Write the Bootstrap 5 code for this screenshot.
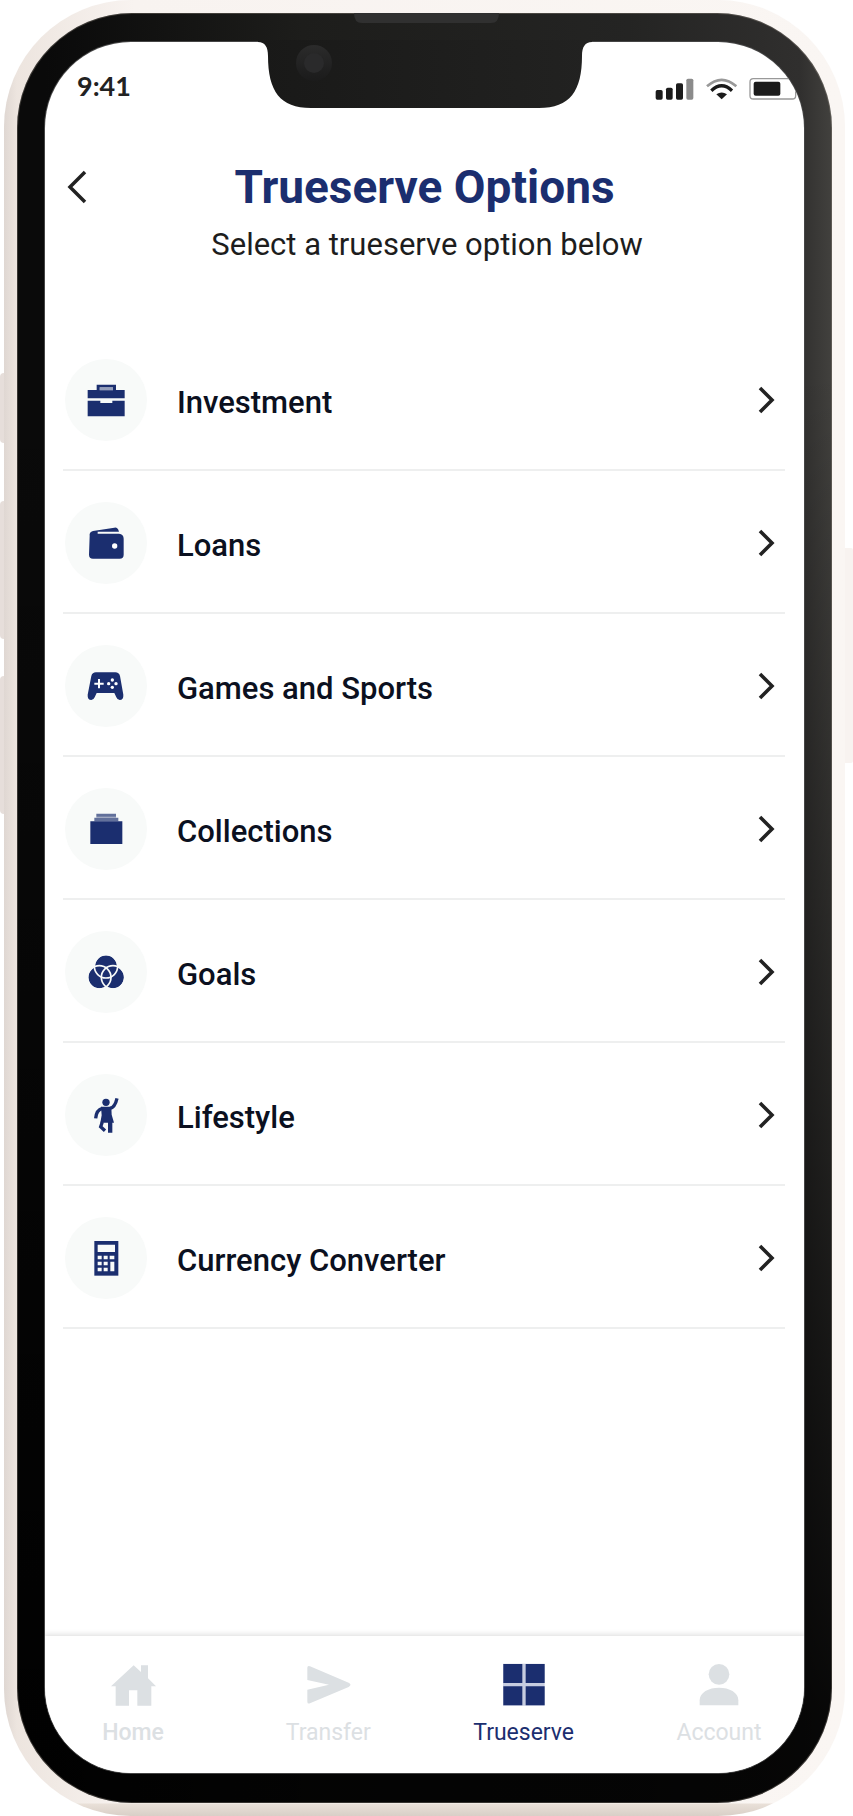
<!DOCTYPE html>
<html lang="en">
<head>
<meta charset="utf-8">
<meta name="viewport" content="width=device-width, initial-scale=1">
<title>Trueserve Options</title>
<link href="https://cdn.jsdelivr.net/npm/bootstrap@5.3.0/dist/css/bootstrap.min.css" rel="stylesheet">
<style>
  :root { --navy: #1b2e6f; --muted-ink: #dce0e3; --disc: #f8faf9; }
  body { font-family: Roboto, "Liberation Sans", sans-serif; background: #fff; color: #1d1d1d; }

  /* Handset */
  .phone { min-height: 100vh; padding: 0 8px 0 4px; }
  .shell {
    padding: 13px; border-radius: 127px;
    background:
      linear-gradient(to top, #d9cfc7 0, #e9e0d8 12px, transparent 13px),
      linear-gradient(to right, #dfd7d2 0, #ede5df 13px, #f8f3f0 130px, #faf6f3 100%);
  }
  .bezel {
    padding: 29px 28px 30px; border-radius: 115px;
    box-shadow: inset 0 0 0 1px rgba(150, 140, 130, .35);
    background:
      linear-gradient(to bottom, transparent 20%, rgba(0, 0, 0, .4) 55%, rgba(0, 0, 0, .65) 75%, rgba(0, 0, 0, .88) 95%),
      linear-gradient(to right, #0a0a0a 0, #0a0a0a 28px, #1d1d1b 35%, #242423 75%, #302f2e 96%, #42413e 100%);
  }
  .screen { border-radius: 86px; background: #fff; overflow: hidden; box-shadow: 0 0 0 1px #454545; }
  .notch { position: absolute; top: 0; left: 50%; transform: translateX(-50%); }
  .side-key { position: absolute; background: #e6deda; }
  .key-left { left: 0; width: 4px; border-radius: 4px 0 0 4px; }
  .key-right { right: 0; width: 8px; background: #f8f3f0; border-radius: 0 2px 2px 0; }

  /* Status bar and heading */
  .status { height: 65px; padding: 24px 5px 0 32px; }
  .clock { font: 700 27px/40px Lato, sans-serif; color: #222; }
  .heading { padding: 52px 16px 0; }
  .side-slot { width: 40px; height: 56px; }
  .heading h1 { font-size: 46px; line-height: 56px; font-weight: 700; color: var(--navy); }
  .lead-text { font-size: 31px; line-height: 40px; margin-top: 10px; padding-left: 5px; }

  /* Options */
  .options { margin: 63px 19px 0 18px; --bs-list-group-border-radius: 0; }
  .options .option, .options .option:last-child {
    height: 143px; padding: 2px 10px 0 2px; border: 0; border-bottom: 2px solid #eeefef;
    font-size: 31px; line-height: 40px; font-weight: 500; color: #0b1020; background: #fff;
  }
  .disc { width: 82px; height: 82px; margin-right: 30px; background: var(--disc); color: var(--navy); }
  .option-name { padding-top: 6px; }

  /* Tab bar */
  .tabbar { padding: 26px 32px 26px 35px; box-shadow: 0 0 6px 1px rgba(0, 0, 0, .15); background: #fff; }
  .tab { width: 106px; gap: 11px; font-size: 23px; line-height: 28px; color: var(--muted-ink); text-decoration: none; }
  .tab.active { color: var(--navy); }
  .tab-strong { font-weight: 500; }
</style>
</head>
<body>
<div class="phone position-relative d-flex flex-column">
  <span class="side-key key-left" style="top:373px;height:70px"></span>
  <span class="side-key key-left" style="top:501px;height:138px"></span>
  <span class="side-key key-left" style="top:676px;height:138px"></span>
  <span class="side-key key-right" style="top:548px;height:215px"></span>

  <div class="shell flex-grow-1 d-flex flex-column">
    <div class="bezel position-relative flex-grow-1 d-flex flex-column">
      <div class="screen flex-grow-1 d-flex flex-column">

        <div class="status d-flex justify-content-between">
          <span class="clock">9:41</span>
          <svg width="144" height="40" viewBox="0 0 432 120" aria-hidden="true">
            <g fill="#1b1b1b">
              <rect x="2" y="72" width="21" height="29" rx="5"/>
              <rect x="33" y="65" width="20" height="36" rx="5"/>
              <rect x="63" y="52" width="21" height="49" rx="5"/>
              <rect x="94" y="38" width="21" height="63" rx="5" fill="#8b8b8b"/>
              <path d="M184 85Q200 74 216 85L200 100Z"/>
              <rect x="296" y="47" width="80" height="42" rx="6"/>
            </g>
            <path d="M156 61Q200 22 244 61" fill="none" stroke="#999" stroke-width="8"/>
            <path d="M169 74Q200 45 231 74" fill="none" stroke="#1b1b1b" stroke-width="10"/>
            <rect x="285" y="38" width="137" height="61" rx="10" fill="none" stroke="#999" stroke-width="4"/>
          </svg>
        </div>

        <header class="heading">
          <div class="d-flex align-items-center">
            <button type="button" class="side-slot btn border-0 p-0 d-flex align-items-center" aria-label="Back">
              <svg width="32" height="34" viewBox="0 0 32 34" fill="none" stroke="#222" stroke-width="3.5"><path d="M24 2 9 17l15 15"/></svg>
            </button>
            <h1 class="flex-grow-1 text-center mb-0">Trueserve Options</h1>
            <span class="side-slot"></span>
          </div>
          <p class="lead-text text-center mb-0">Select a trueserve option below</p>
        </header>

        <main class="flex-grow-1">
          <nav class="options list-group list-group-flush" aria-label="Options">
            <a href="#" class="option list-group-item list-group-item-action d-flex align-items-center">
              <span class="disc rounded-circle d-flex align-items-center justify-content-center">
                <svg width="42" height="42" viewBox="0 0 126 126" fill="currentColor"><path fill-rule="evenodd" d="M8 33H35V17H93V33H119V58H8ZM44 25V34H84V25Z"/><path d="M8 65H46V72H82V65H119V112H8Z"/><path d="M44 25h40v9H44z" opacity=".45"/></svg>
              </span>
              <span class="option-name flex-grow-1">Investment</span>
              <svg width="17" height="28" viewBox="0 0 17 28" fill="none" stroke="#222" stroke-width="3.6"><path d="M2 2 14 14 2 26"/></svg>
            </a>
            <a href="#" class="option list-group-item list-group-item-action d-flex align-items-center">
              <span class="disc rounded-circle d-flex align-items-center justify-content-center">
                <svg width="42" height="42" viewBox="0 0 126 126" fill="currentColor"><path d="M14 42Q12 30 24 27L88 17Q98 15 102 29H38V35H102Q116 36 116 50V98Q116 110 104 110H24Q12 110 12 98Z"/><circle cx="89" cy="72" r="8" fill="#fff"/></svg>
              </span>
              <span class="option-name flex-grow-1">Loans</span>
              <svg width="17" height="28" viewBox="0 0 17 28" fill="none" stroke="#222" stroke-width="3.6"><path d="M2 2 14 14 2 26"/></svg>
            </a>
            <a href="#" class="option list-group-item list-group-item-action d-flex align-items-center">
              <span class="disc rounded-circle d-flex align-items-center justify-content-center">
                <svg width="42" height="42" viewBox="0 0 126 126" fill="currentColor"><path d="M33 22H91Q102 22 105 33L115 89Q116 105 104 105Q97 105 94 97L88 84H35L29 97Q26 105 19 105Q7 105 8 89L19 33Q22 22 33 22Z"/><path d="M42 42V70M28 56H56" stroke="#fff" stroke-width="6"/><g fill="#fff"><circle cx="82" cy="45" r="5"/><circle cx="82" cy="67" r="5"/><circle cx="71" cy="56" r="5"/><circle cx="93" cy="56" r="5"/></g></svg>
              </span>
              <span class="option-name flex-grow-1">Games and Sports</span>
              <svg width="17" height="28" viewBox="0 0 17 28" fill="none" stroke="#222" stroke-width="3.6"><path d="M2 2 14 14 2 26"/></svg>
            </a>
            <a href="#" class="option list-group-item list-group-item-action d-flex align-items-center">
              <span class="disc rounded-circle d-flex align-items-center justify-content-center">
                <svg width="42" height="42" viewBox="0 0 126 126" fill="currentColor"><path d="M16 40h96v68H16z"/><path d="M28 29h72v11H28zM34 17h59v9H34z" opacity=".68"/><path d="M34 26h59v3H34z" opacity=".4"/></svg>
              </span>
              <span class="option-name flex-grow-1">Collections</span>
              <svg width="17" height="28" viewBox="0 0 17 28" fill="none" stroke="#222" stroke-width="3.6"><path d="M2 2 14 14 2 26"/></svg>
            </a>
            <a href="#" class="option list-group-item list-group-item-action d-flex align-items-center">
              <span class="disc rounded-circle d-flex align-items-center justify-content-center">
                <svg width="42" height="42" viewBox="0 0 126 126" fill="currentColor"><circle cx="63" cy="46" r="33"/><circle cx="43" cy="79" r="33"/><circle cx="84" cy="79" r="33"/><g fill="none" stroke="#f8faf9" stroke-width="5"><circle cx="63" cy="46" r="35"/><circle cx="43" cy="79" r="35"/><circle cx="84" cy="79" r="35"/></g></svg>
              </span>
              <span class="option-name flex-grow-1">Goals</span>
              <svg width="17" height="28" viewBox="0 0 17 28" fill="none" stroke="#222" stroke-width="3.6"><path d="M2 2 14 14 2 26"/></svg>
            </a>
            <a href="#" class="option list-group-item list-group-item-action d-flex align-items-center">
              <span class="disc rounded-circle d-flex align-items-center justify-content-center">
                <svg width="42" height="42" viewBox="0 0 126 126" fill="currentColor"><circle cx="63" cy="25" r="11"/><path d="M48 38H79L80 62 87 86H82V116H69V86H46L50 64Z"/><path d="M75 43Q90 40 96 13M52 43Q34 48 32 73M52 84L47 98 60 110" fill="none" stroke="currentColor" stroke-width="10"/></svg>
              </span>
              <span class="option-name flex-grow-1">Lifestyle</span>
              <svg width="17" height="28" viewBox="0 0 17 28" fill="none" stroke="#222" stroke-width="3.6"><path d="M2 2 14 14 2 26"/></svg>
            </a>
            <a href="#" class="option list-group-item list-group-item-action d-flex align-items-center">
              <span class="disc rounded-circle d-flex align-items-center justify-content-center">
                <svg width="42" height="42" viewBox="0 0 126 126" fill="currentColor"><path d="M28 12h72v104H28z"/><path fill="#f8faf9" d="M38 23h52v22H38zM38 56h12v11H38zM56 56h12v11H56zM74 56h14v11H74zM38 74h12v11H38zM56 74h12v11H56zM38 92h12v11H38zM56 92h12v11H56zM76 74h12v29H76z"/></svg>
              </span>
              <span class="option-name flex-grow-1">Currency Converter</span>
              <svg width="17" height="28" viewBox="0 0 17 28" fill="none" stroke="#222" stroke-width="3.6"><path d="M2 2 14 14 2 26"/></svg>
            </a>
          </nav>
        </main>

        <nav class="tabbar d-flex justify-content-between" aria-label="Main">
          <a href="#" class="tab tab-strong d-flex flex-column align-items-center">
            <svg width="46" height="46" viewBox="0 0 138 138" fill="currentColor"><path d="M71 10 93 30V10H114V49L138 73H124V131H82V85H57V131H17V73H3Z"/></svg>
            <span>Home</span>
          </a>
          <a href="#" class="tab d-flex flex-column align-items-center">
            <svg width="46" height="46" viewBox="0 0 138 138" fill="currentColor"><path d="M7 17Q7 10 15 13L131 62Q142 68 131 75L15 124Q7 127 7 119V83L72 68 7 54Z"/></svg>
            <span>Transfer</span>
          </a>
          <a href="#" class="tab active d-flex flex-column align-items-center" aria-current="page">
            <svg width="46" height="46" viewBox="0 0 138 138" fill="currentColor"><path d="M6 5h125v126H6z" fill="#c6cce0"/><path d="M7 6h57v57H7zM74 6h57v57H74zM7 73h57v57H7zM74 73h57v57H74z"/></svg>
            <span>Trueserve</span>
          </a>
          <a href="#" class="tab d-flex flex-column align-items-center">
            <svg width="46" height="46" viewBox="0 0 138 138" fill="currentColor"><circle cx="69" cy="37" r="31"/><path d="M11 130V115C11 91 38 77 69 77S127 91 127 115V130Z"/></svg>
            <span>Account</span>
          </a>
        </nav>
      </div>

      <svg class="notch" width="334" height="95" viewBox="0 0 334 95" aria-hidden="true">
        <defs>
          <linearGradient id="notchFill"><stop offset="0" stop-color="#191918"/><stop offset="1" stop-color="#222221"/></linearGradient>
          <linearGradient id="lens" x2="0" y2="1"><stop offset="0" stop-color="#2b2b2b"/><stop offset="1" stop-color="#1b1b1b"/></linearGradient>
        </defs>
        <path fill="url(#notchFill)" d="M0 27V29C7 29 10 34 10 43C10 78 22 95 53 95H281C312 95 324 78 324 43C324 34 327 29 334 29V27Z"/>
        <path fill="#303030" d="M96 0H241Q241 10 233 10H104Q96 10 96 0Z"/>
        <circle cx="56" cy="50" r="18" fill="url(#lens)"/>
        <circle cx="56" cy="50" r="10" fill="#2a2a2b"/>
      </svg>
    </div>
  </div>
</div>
<script src="https://cdn.jsdelivr.net/npm/bootstrap@5.3.0/dist/js/bootstrap.bundle.min.js"></script>
</body>
</html>
